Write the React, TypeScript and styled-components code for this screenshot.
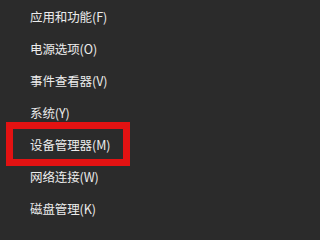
import React from "react";
import styled, { createGlobalStyle } from "styled-components";

const GlobalStyle = createGlobalStyle`
  html, body {
    margin: 0;
    padding: 0;
    background: #2b2b2b;
  }
`;

const Menu = styled.ul`
  list-style: none;
  margin: 0;
  padding: 0;
  width: 290px;
  height: 234px;
  background: #2b2b2b;
  overflow: hidden;
  font-family: "Noto Sans CJK SC", "Noto Sans", sans-serif;
`;

const MenuItem = styled.li<{ highlighted?: boolean }>`
  position: relative;
  display: flex;
  align-items: center;
  height: 32px;
  padding-left: 30px;
  color: #ececec;
  font-size: 12.5px;
  letter-spacing: -0.1px;

  &::after {
    content: "";
    display: ${({ highlighted }) => (highlighted ? "block" : "none")};
    position: absolute;
    top: -6px;
    bottom: -6px;
    left: 6px;
    width: 124px;
    box-sizing: border-box;
    border: 7px solid #e31212;
    pointer-events: none;
  }
`;

const items = [
  "应用和功能(F)",
  "电源选项(O)",
  "事件查看器(V)",
  "系统(Y)",
  "设备管理器(M)",
  "网络连接(W)",
  "磁盘管理(K)",
];

const App: React.FC = () => (
  <>
    <GlobalStyle />
    <Menu>
      {items.map((label) => (
        <MenuItem key={label} highlighted={label === "设备管理器(M)"}>
          {label}
        </MenuItem>
      ))}
    </Menu>
  </>
);

export default App;
